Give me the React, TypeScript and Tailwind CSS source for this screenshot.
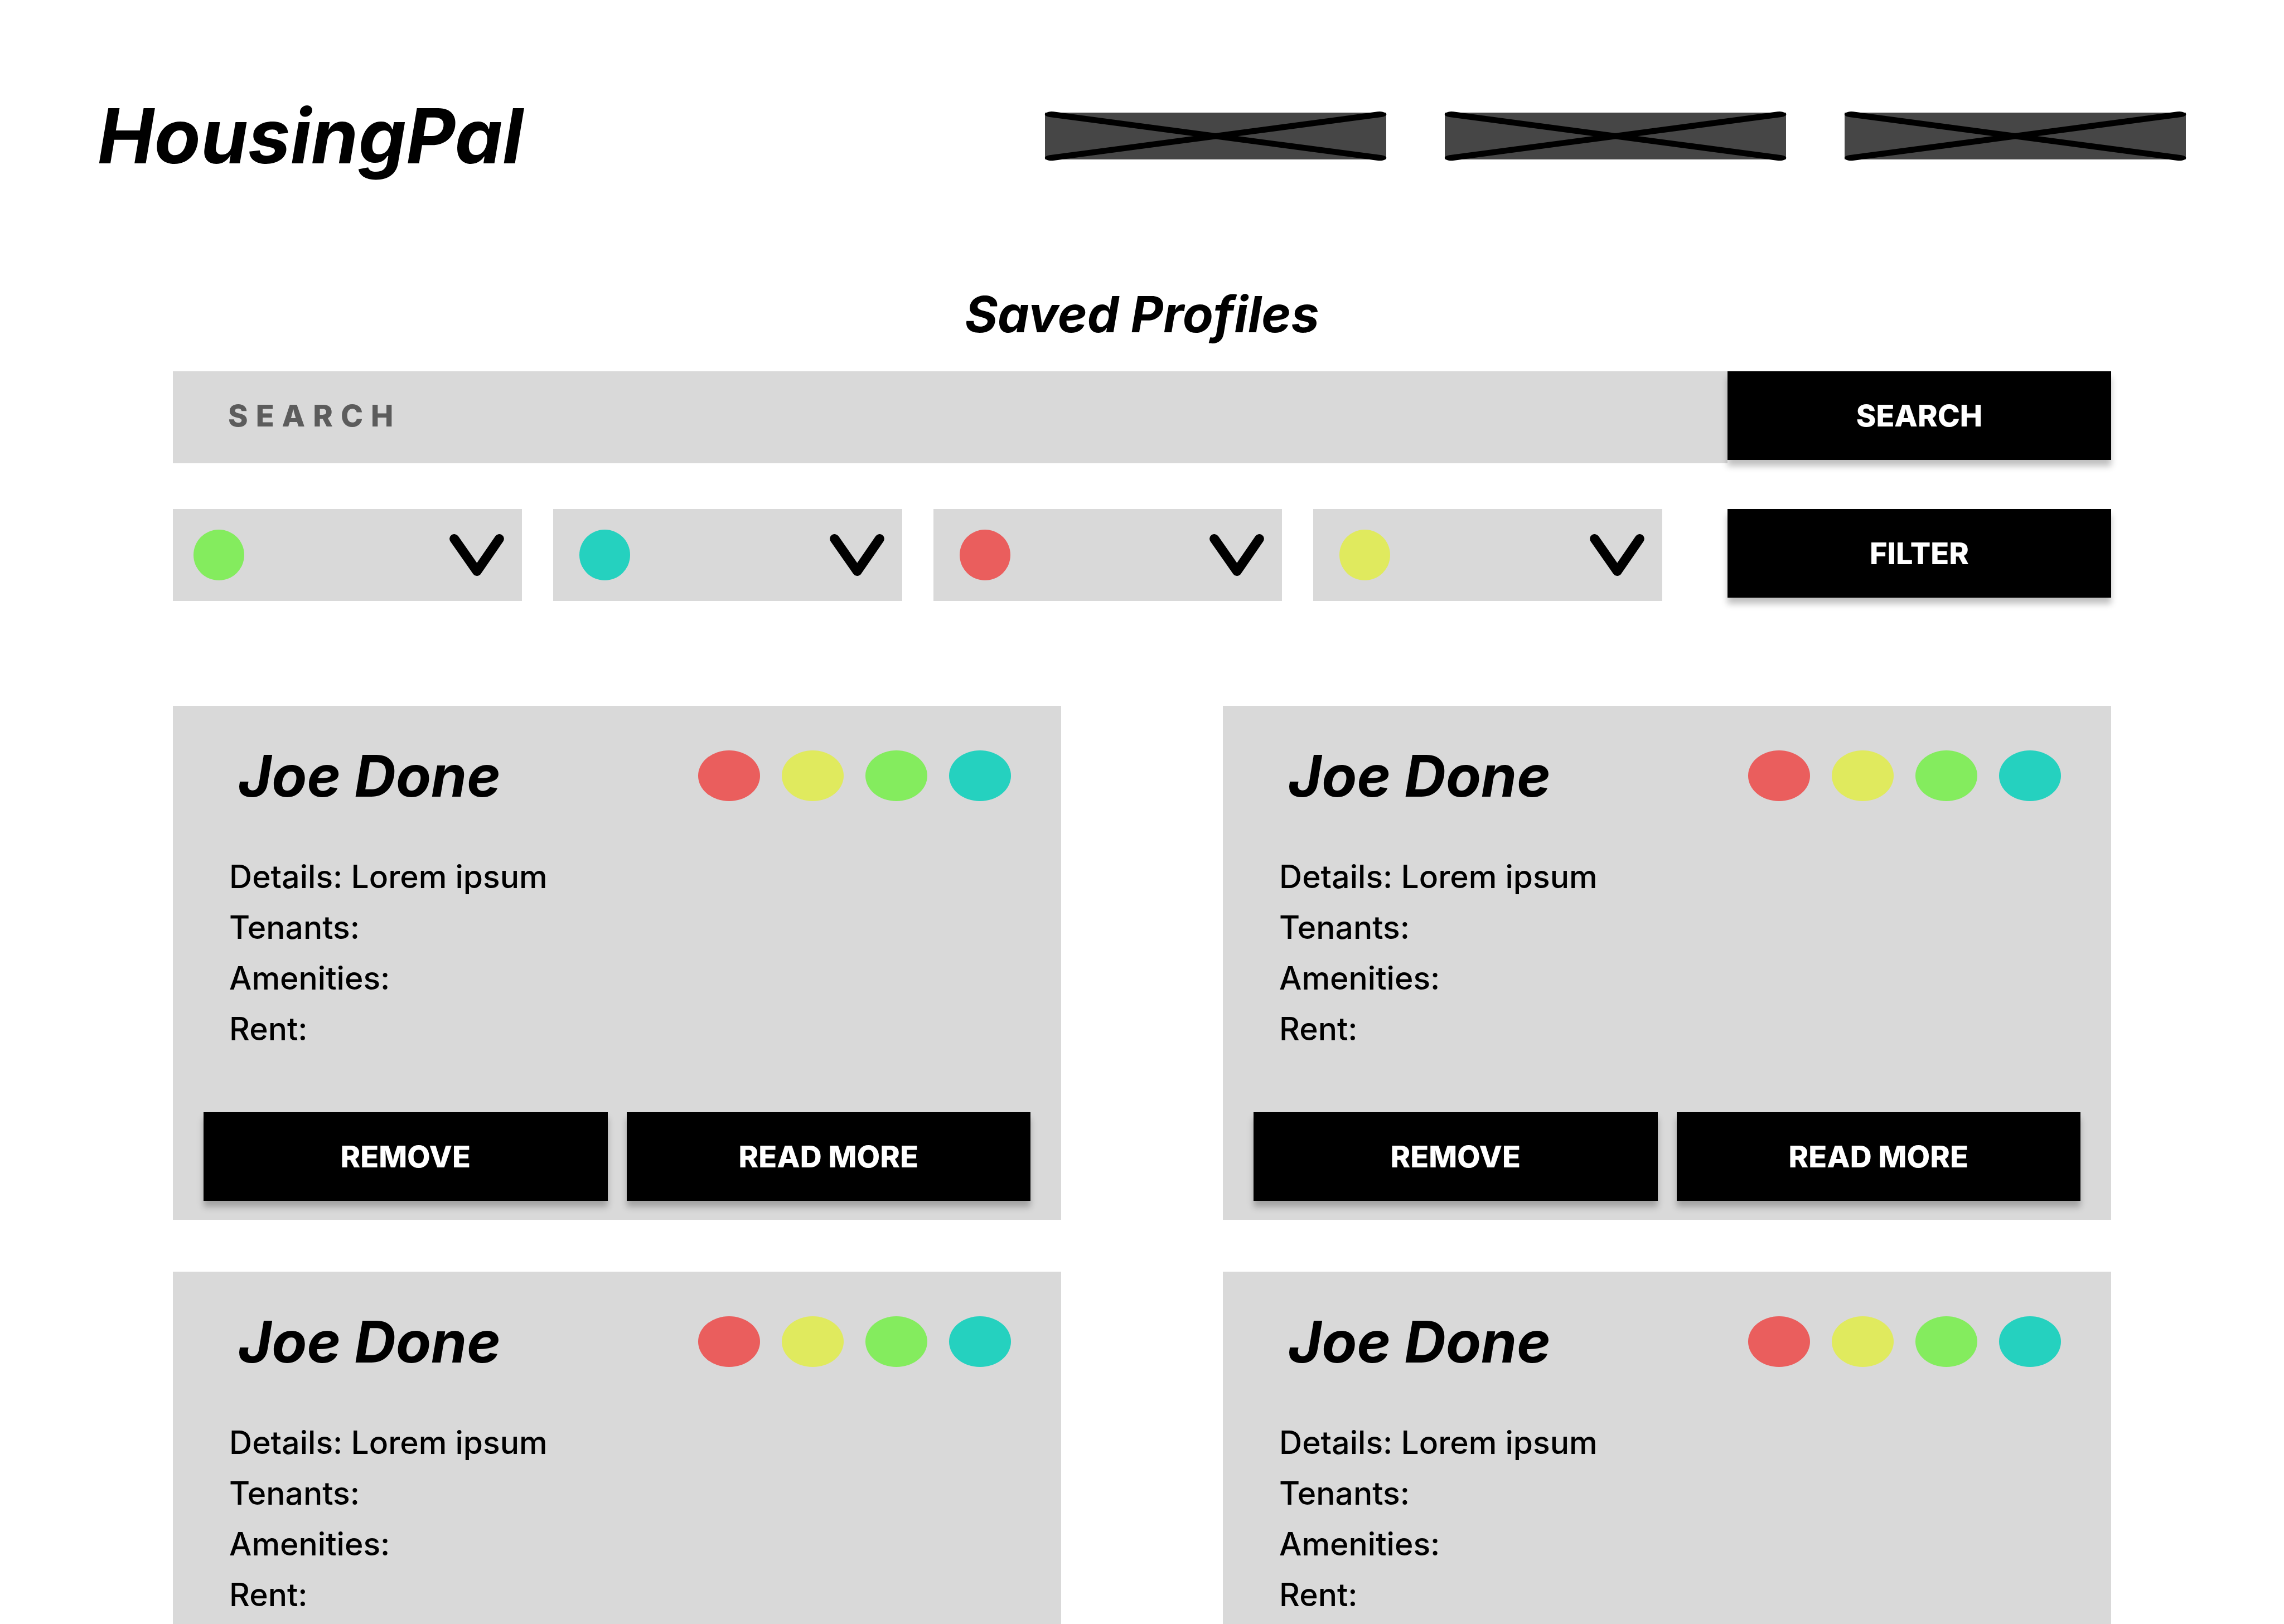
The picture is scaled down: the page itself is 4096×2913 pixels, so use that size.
const NAV_LINKS = ['Home', 'Profiles', 'Account'];

const FILTERS = [
  { label: 'Green category', color: 'bg-[#84ec5e]' },
  { label: 'Teal category', color: 'bg-[#25d1bf]' },
  { label: 'Red category', color: 'bg-[#ea5e5d]' },
  { label: 'Yellow category', color: 'bg-[#e0ea5e]' },
];

const TAGS = ['bg-[#ea5e5d]', 'bg-[#e0ea5e]', 'bg-[#84ec5e]', 'bg-[#25d1bf]'];

const PROFILES = [1, 2, 3, 4].map((id) => ({
  id,
  name: 'Joe Done',
  lines: ['Details: Lorem ipsum', 'Tenants:', 'Amenities:', 'Rent:'],
}));

function ActionButton({ children, type = 'button' }: { children: string; type?: 'button' | 'submit' }) {
  return (
    <button
      type={type}
      className="h-[159px] w-full bg-black text-center text-[54px] leading-[64px] font-extrabold text-white shadow-[0_11px_11px_rgba(0,0,0,0.25)]"
    >
      {children}
    </button>
  );
}

function NavPlaceholder({ label }: { label: string }) {
  return (
    <a href="#" aria-label={label} className="block">
      <svg viewBox="0 0 860 118" className="block h-[84px] w-[612px] overflow-visible" aria-hidden="true">
        <rect width="860" height="118" fill="#464646" />
        <g transform="scale(2.4 1)">
          <path d="M7 4.4 L351.4 114 M351.4 4.4 L7 114" stroke="#000" strokeWidth="14.2" strokeLinecap="round" />
        </g>
      </svg>
    </a>
  );
}

function FilterSelect({ label, color }: { label: string; color: string }) {
  return (
    <div className="group grid h-[165px] bg-[#d9d9d9]">
      <div className="pointer-events-none z-10 col-start-1 row-start-1 flex items-center justify-between pr-[32px] pl-[47px] group-first:pl-[37px]">
        <span className={`size-[91px] rounded-full ${color}`} />
        <svg viewBox="0 0 138 106" className="h-[75px] w-[98px]" fill="none" aria-hidden="true">
          <path d="M12 12 L69.5 94 L126 12" stroke="#000" strokeWidth="24" strokeLinecap="round" strokeLinejoin="round" />
        </svg>
      </div>
      <select aria-label={label} className="col-start-1 row-start-1 h-full w-full appearance-none bg-transparent">
        <option value="" />
      </select>
    </div>
  );
}

function ProfileCard({ name, lines }: { name: string; lines: string[] }) {
  return (
    <article className="bg-[#d9d9d9] px-[55px] pt-[80px] pb-[34px]">
      <div className="flex items-center justify-between pr-[35px] pl-[62px]">
        <h2 className="text-[103px] leading-[91px] font-bold italic">{name}</h2>
        <div className="flex gap-[39px]">
          {TAGS.map((tag) => (
            <span key={tag} className={`h-[91px] w-[111px] rounded-[50%] ${tag}`} />
          ))}
        </div>
      </div>
      <ul className="mt-[90px] pl-[46px] text-[57px] leading-[91px] font-medium">
        {lines.map((line) => (
          <li key={line}>{line}</li>
        ))}
      </ul>
      <div className="mt-[104px] grid grid-cols-2 gap-[34px]">
        <ActionButton>REMOVE</ActionButton>
        <ActionButton>READ MORE</ActionButton>
      </div>
    </article>
  );
}

export default function App() {
  return (
    <div className="min-h-screen bg-white font-['Inter',sans-serif] text-black">
      <header className="flex items-center justify-between pt-[161px] pr-[176px] pl-[175px]">
        <a href="#" className="text-[136px] leading-[166px] font-bold italic">
          HousingPal
        </a>
        <nav className="flex gap-[105px]">
          {NAV_LINKS.map((label) => (
            <NavPlaceholder key={label} label={label} />
          ))}
        </nav>
      </header>

      <main className="px-[310px]">
        <h1 className="mt-[182px] text-center text-[90px] leading-[110px] font-bold italic">Saved Profiles</h1>

        <form role="search" className="mt-[47px] grid grid-cols-[1fr_688px]" onSubmit={(event) => event.preventDefault()}>
          <input
            type="search"
            aria-label="Search"
            placeholder="SEARCH"
            className="h-[165px] w-full bg-[#d9d9d9] px-[99px] pb-[6px] text-[54px] font-extrabold tracking-[14px] outline-none placeholder:text-[#5c5c5c]"
          />
          <ActionButton type="submit">SEARCH</ActionButton>
        </form>

        <div className="mt-[82px] grid grid-cols-[1fr_688px] gap-[117px]">
          <div className="grid grid-cols-4 gap-[56px]">
            {FILTERS.map((filter) => (
              <FilterSelect key={filter.label} {...filter} />
            ))}
          </div>
          <ActionButton>FILTER</ActionButton>
        </div>

        <section className="mt-[188px] grid grid-cols-2 gap-x-[290px] gap-y-[93px]">
          {PROFILES.map((profile) => (
            <ProfileCard key={profile.id} name={profile.name} lines={profile.lines} />
          ))}
        </section>
      </main>
    </div>
  );
}
